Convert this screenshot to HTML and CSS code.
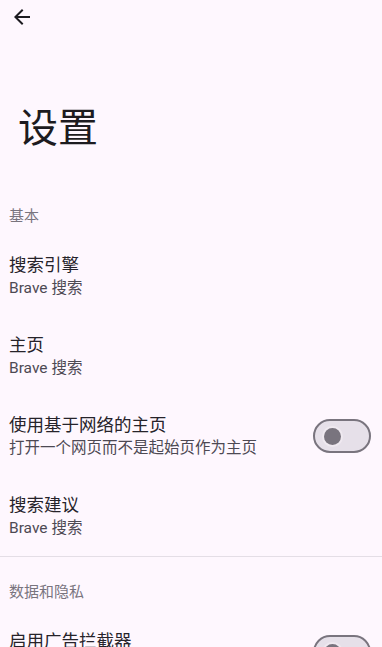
FILE: index.html
```html
<!DOCTYPE html>
<html lang="zh-CN">
<head>
    <meta charset="UTF-8">
    <meta name="viewport" content="width=device-width, initial-scale=1.0">
    <title>设置</title>
    <link rel="stylesheet" href="styles.css">
</head>
<body>
    <div class="toolbar">
        <svg class="back" viewBox="0 0 24 24" width="24" height="24">
            <path d="M20 11H7.83l5.59-5.59L12 4l-8 8 8 8 1.41-1.41L7.83 13H20v-2z" fill="#1d1b20"/>
        </svg>
    </div>

    <h1 class="page-title">设置</h1>

    <div class="category">基本</div>

    <div class="pref">
        <div class="pref-text">
            <div class="pref-title">搜索引擎</div>
            <div class="pref-summary">Brave 搜索</div>
        </div>
    </div>

    <div class="pref">
        <div class="pref-text">
            <div class="pref-title">主页</div>
            <div class="pref-summary">Brave 搜索</div>
        </div>
    </div>

    <div class="pref">
        <div class="pref-text">
            <div class="pref-title">使用基于网络的主页</div>
            <div class="pref-summary">打开一个网页而不是起始页作为主页</div>
        </div>
        <div class="switch"><span class="thumb"></span></div>
    </div>

    <div class="pref">
        <div class="pref-text">
            <div class="pref-title">搜索建议</div>
            <div class="pref-summary">Brave 搜索</div>
        </div>
    </div>

    <div class="divider"></div>

    <div class="category second">数据和隐私</div>

    <div class="pref">
        <div class="pref-text">
            <div class="pref-title">启用广告拦截器</div>
            <div class="pref-summary">拦截广告和跟踪器</div>
        </div>
        <div class="switch"><span class="thumb"></span></div>
    </div>
</body>
</html>
```

FILE: styles.css
```css
body {
    margin: 0;
    padding: 0;
    background-color: #fef7fe;
    color: #1d1b20;
    font-family: Roboto, "Noto Sans CJK SC", sans-serif;
    height: 647px;
    overflow: hidden;
}

.toolbar {
    height: 34px;
    display: flex;
    align-items: center;
    padding-left: 10px;
}

.back {
    display: block;
}

.page-title {
    margin: 0;
    padding: 71px 0 28px 18px;
    font-size: 40px;
    line-height: 48px;
    font-weight: 400;
}

/* section headers */
.category {
    padding: 25px 9px 10px;
    font-size: 15px;
    line-height: 20px;
    color: #79747e;
}

.pref {
    height: 80px;
    display: flex;
    align-items: center;
    justify-content: space-between;
    padding: 0 11px 0 9px;
}

.pref-title {
    font-size: 17.5px;
    line-height: 24px;
    color: #26232a;
}

.pref-summary {
    font-size: 15.5px;
    line-height: 22px;
    color: #4d4953;
}

/* off switch */
.switch {
    width: 58px;
    height: 34px;
    border: 2px solid #79747e;
    border-radius: 17px;
    background-color: #e6e0e9;
    display: flex;
    align-items: center;
    padding-left: 8.5px;
    box-sizing: border-box;
    flex-shrink: 0;
}

.switch .thumb {
    width: 17px;
    height: 17px;
    border-radius: 50%;
    background-color: #79747e;
    box-shadow: 0 0 0 2px #efe9f0;
}

.divider {
    height: 1px;
    background-color: #e4dee6;
}
```
